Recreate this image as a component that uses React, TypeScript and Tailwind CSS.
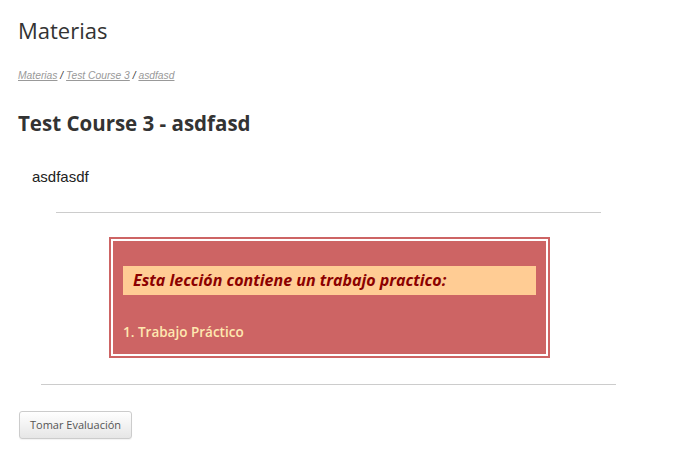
import React from "react";

const crumbs = [
  { label: "Materias", url: "#" },
  { label: "Test Course 3", url: "#" },
  { label: "asdfasd", url: "#" },
];

const App: React.FC = () => {
  return (
    <div className="min-h-[470px] bg-white px-[18px] pt-[15px] font-['Open_Sans',sans-serif] text-[#333]">
      {/* title */}
      <h1 className="text-[22px] leading-[30px] font-normal">Materias</h1>

      {/* breadcrumb */}
      <div className="mt-[24px] font-['Liberation_Sans',Arial,sans-serif] text-[10.3px] italic leading-[14px]">
        {crumbs.map((c, i) => (
          <span key={c.label}>
            <a href={c.url} className="text-[#999] underline">
              {c.label}
            </a>
            {i < crumbs.length - 1 && <span className="text-[#333]"> / </span>}
          </span>
        ))}
      </div>

      <h2 className="mt-[25px] text-[20.5px] leading-[30px] font-bold">
        Test Course 3 - asdfasd
      </h2>

      <p className="mt-[29px] pl-[14px] font-['Liberation_Sans',Arial,sans-serif] text-[15px] leading-[20px] text-[#222]">
        asdfasdf
      </p>

      <hr className="mt-[25px] ml-[38px] mr-[66px] border-0 border-t border-[#ccc]" />

      {/* trabajo practico box */}
      <div className="mt-[24px] ml-[91px] w-[441px] border-2 border-[#cd6464] bg-white p-[2px]">
        <div className="bg-[#cd6464] px-[10px] pt-[25px] pb-[12px]">
          <div className="bg-[#ffcc94] px-[10px] py-[3px]">
            <h3 className="text-[16px] leading-[23px] font-bold italic text-[#8b0000]">
              Esta lección contiene un trabajo practico:
            </h3>
          </div>
          <ul className="mt-[27px]">
            <li className="text-[13.5px] leading-[20px] font-semibold text-[#ffe8b0]">
              1. Trabajo Práctico
            </li>
          </ul>
        </div>
      </div>

      <hr className="mt-[26px] ml-[23px] mr-[51px] border-0 border-t border-[#ccc]" />

      <button className="mt-[26px] ml-[1px] h-[28px] w-[113px] rounded-[3px] border border-[#ccc] bg-gradient-to-b from-white to-[#e6e6e6] text-[11px] text-[#555] shadow-[0_1px_1px_rgba(0,0,0,0.05)]">
        Tomar Evaluación
      </button>
    </div>
  );
};

export default App;
